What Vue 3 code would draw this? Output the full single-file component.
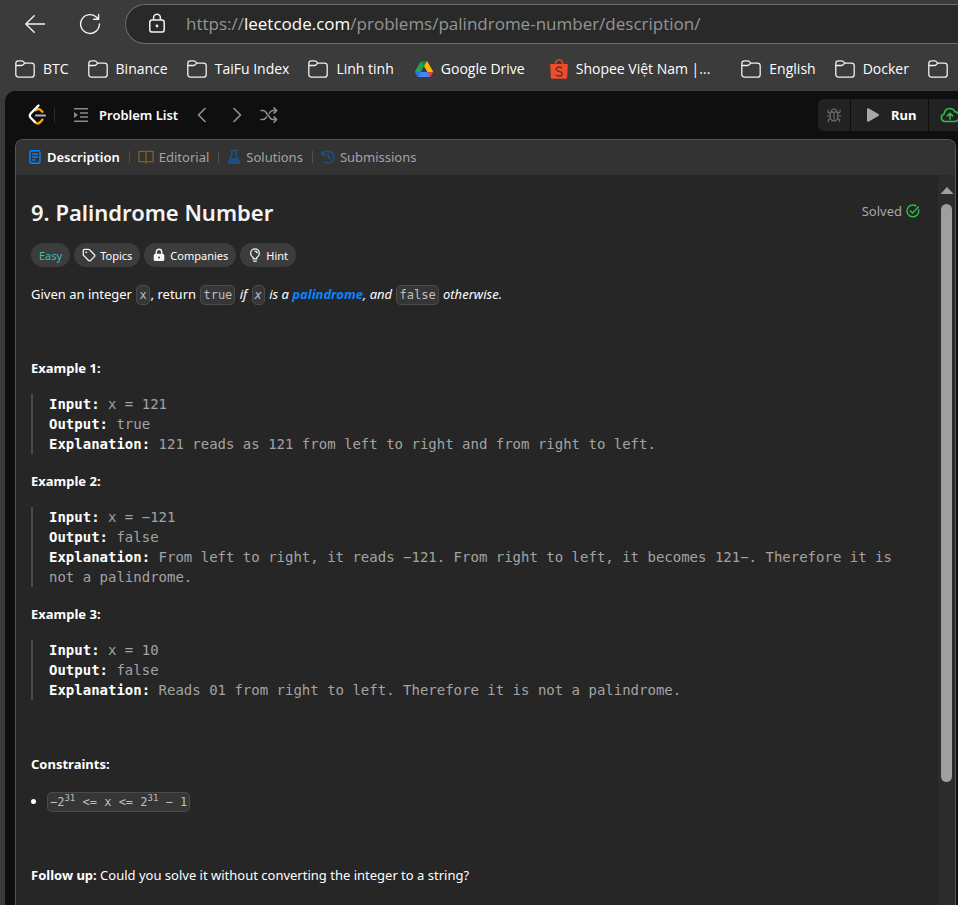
<script setup>
import { ref } from 'vue'

const url = ref('https://leetcode.com/problems/palindrome-number/description/')

const bookmarks = [
  { label: 'BTC', icon: 'folder' },
  { label: 'Binance', icon: 'folder' },
  { label: 'TaiFu Index', icon: 'folder' },
  { label: 'Linh tinh', icon: 'folder' },
  { label: 'Google Drive', icon: 'drive' },
  { label: 'Shopee Việt Nam |...', icon: 'shopee' },
  { label: 'English', icon: 'folder' },
  { label: 'Docker', icon: 'folder' },
  { label: '', icon: 'folder' }
]

const examples = [
  {
    input: 'x = 121',
    output: 'true',
    explanation: '121 reads as 121 from left to right and from right to left.'
  },
  {
    input: 'x = −121',
    output: 'false',
    explanation:
      'From left to right, it reads −121. From right to left, it becomes 121−. Therefore it is not a palindrome.'
  },
  {
    input: 'x = 10',
    output: 'false',
    explanation: 'Reads 01 from right to left. Therefore it is not a palindrome.'
  }
]
</script>

<template>
  <div class="browser">
    <header class="chrome">
      <div class="toolbar">
        <button class="nav-btn" type="button" aria-label="Back">
          <svg width="22" height="22" viewBox="0 0 22 22" fill="none" stroke="#f2f2f2" stroke-width="1.4" stroke-linecap="round" stroke-linejoin="round">
            <path d="M10.2 2.8 1.8 11l8.4 8.2M2 11h18.5" />
          </svg>
        </button>
        <button class="nav-btn" type="button" aria-label="Refresh">
          <svg width="22" height="22" viewBox="0 0 22 22" fill="none" stroke="#f2f2f2" stroke-width="1.4" stroke-linecap="round" stroke-linejoin="round">
            <path d="M20.4 11a9.4 9.4 0 1 1-3.400-7.200l2.400 2.300M19.600 1.400v4.900h-5" />
          </svg>
        </button>
        <div class="address">
          <svg width="18" height="22" viewBox="0 0 18 22" fill="none" stroke="#f2f2f2" stroke-width="1.5">
            <rect x="1.8" y="7.100" width="14.400" height="12" rx="2.400" />
            <path d="M5.600 6.900V4.700a3.400 3.400 0 0 1 6.800 0v2.200" />
            <circle cx="9" cy="13" r="1.400" fill="#f2f2f2" stroke="none" />
          </svg>
          <div class="url">
            <input v-model="url" type="text" aria-label="Address" />
            <span class="url-view" aria-hidden="true">https://<b>leetcode.com</b>/problems/palindrome-number/description/</span>
          </div>
        </div>
      </div>

      <nav class="bookmarks" aria-label="Bookmarks">
        <a v-for="(b, i) in bookmarks" :key="i" href="#" class="bookmark" :class="b.icon">
          <svg v-if="b.icon === 'folder'" width="20" height="20" viewBox="0 0 20 20" fill="none" stroke="#f0f0f0" stroke-width="1.300" stroke-linejoin="round">
            <path d="M.8 4.600c0-1.700 1-2.700 2.700-2.700h3.100c.8 0 1.300.2 1.800.7l1.500 1.500h6.600c1.700 0 2.700 1 2.700 2.700v8.600c0 1.700-1 2.700-2.700 2.700h-13c-1.700 0-2.700-1-2.700-2.700z" />
            <path d="M.9 6.500h5.400c.8 0 1.300-.2 1.800-.7l1.700-1.700" />
          </svg>
          <svg v-else-if="b.icon === 'drive'" width="18" height="18" viewBox="0 0 87 78">
            <path d="m6.6 66.85 3.85 6.65c.8 1.4 1.95 2.5 3.3 3.3L27.5 53H0c0 1.55.4 3.1 1.2 4.5z" fill="#2674f4" />
            <path d="M43.65 25 29.9 1.2c-1.35.8-2.5 1.9-3.3 3.3L1.2 48.5A9 9 0 0 0 0 53h27.5z" fill="#22a453" />
            <path d="M73.55 76.8c1.35-.8 2.5-1.9 3.3-3.3l1.6-2.75L86.1 57.5c.8-1.4 1.2-2.95 1.2-4.5H59.8l5.85 11.5z" fill="#ea4335" />
            <path d="M43.65 25 57.4 1.2C56.05.4 54.5 0 52.9 0H34.4c-1.6 0-3.15.45-4.5 1.2z" fill="#188038" />
            <path d="M59.8 53H27.5L13.75 76.8c1.35.8 2.9 1.2 4.5 1.2h50.8c1.6 0 3.15-.45 4.5-1.2z" fill="#4285f4" />
            <path d="M73.4 26.5 60.7 4.5c-.8-1.4-1.95-2.5-3.3-3.3L43.65 25 59.8 53h27.45c0-1.55-.4-3.1-1.2-4.5z" fill="#fbbc04" />
          </svg>
          <svg v-else width="18" height="20" viewBox="0 0 18 20" fill="none">
            <path d="M.2 5h17.6l-.6 13.300c0 .9-.6 1.500-1.500 1.500H2.300c-.9 0-1.500-.6-1.500-1.500z" fill="#ee4d2d" />
            <path d="M5.400 5.200C5.400 2.600 6.900.9 9 .9s3.600 1.700 3.600 4.300" stroke="#ee4d2d" stroke-width="1.300" />
            <path d="M12 9.200C11.200 8.300 10.200 8 9 8c-1.600 0-2.800.8-2.800 2.100 0 3 6 1.600 6 4.700 0 1.400-1.300 2.200-3 2.200-1.400 0-2.600-.5-3.500-1.400" stroke="#5a3029" stroke-width="1.300" />
          </svg>
          <span v-if="b.label">{{ b.label }}</span>
        </a>
      </nav>
    </header>

    <div class="page">
      <header class="topbar">
        <a class="logo" href="#" aria-label="LeetCode">
          <svg width="18" height="22" viewBox="0 0 18 22" fill="none" stroke-width="2.300" stroke-linecap="round">
            <path d="M7.800 6.200c1.700-1.300 3.700-1.200 5.100.1l1.600 1.500M14.500 15.600l-2 2.300c-1.500 1.600-3.800 1.800-5.400.4" stroke="#ffa116" />
            <path d="M10.500 1.500 2.900 9.300c-1.300 1.400-1.300 3.300 0 4.700l3.900 3.900" stroke="#fff" />
            <path d="M8 11.600h9" stroke="#b3b3b3" stroke-width="2" />
          </svg>
        </a>
        <span class="rule"></span>
        <button class="plain problem-list" type="button">
          <svg width="16" height="16" viewBox="0 0 16 16" fill="none" stroke="#8a8a8a" stroke-width="1.600">
            <path d="M1 1.800h14M7 6h8M7 10h8M1 14.200h14" />
            <path d="M1 5v6l4-3z" fill="#8a8a8a" stroke="none" />
          </svg>
          Problem List
        </button>
        <button class="plain" type="button" aria-label="Previous problem">
          <svg width="10" height="16" viewBox="0 0 10 16" fill="none" stroke="#8f8f8f" stroke-width="1.700" stroke-linecap="round" stroke-linejoin="round"><path d="M8 1.500 1.500 8 8 14.500" /></svg>
        </button>
        <button class="plain next" type="button" aria-label="Next problem">
          <svg width="10" height="16" viewBox="0 0 10 16" fill="none" stroke="#8f8f8f" stroke-width="1.700" stroke-linecap="round" stroke-linejoin="round"><path d="M2 1.500 8.500 8 2 14.500" /></svg>
        </button>
        <button class="plain shuffle" type="button" aria-label="Random problem">
          <svg width="18" height="16" viewBox="0 0 18 16" fill="none" stroke="#8f8f8f" stroke-width="1.500" stroke-linecap="round" stroke-linejoin="round">
            <path d="M1 3.500h1.800c1.200 0 2 .4 2.700 1.300l4.900 6.400c.7.900 1.500 1.300 2.700 1.300h3.400M1 12.500h1.800c1.200 0 2-.4 2.700-1.300l1-1.300M9.400 6.100l1-1.300c.7-.9 1.500-1.300 2.700-1.300h3.400M14 .9l2.700 2.600L14 6.100M14 9.900l2.700 2.600L14 15.100" />
          </svg>
        </button>

        <div class="actions">
          <button type="button" class="debug" aria-label="Debug">
            <svg width="16" height="16" viewBox="0 0 16 16" fill="none" stroke="#6c6c6c" stroke-width="1.200" stroke-linecap="round" stroke-linejoin="round">
              <path d="M4.300 5.200h7.400v4.600c0 2.400-1.500 4.200-3.700 4.200s-3.700-1.800-3.700-4.200zM8 5.200V14M5.300 5c0-1.900 1-3 2.700-3s2.700 1.100 2.700 3M4.300 6.400 2 5.200V3M11.700 6.400 14 5.200V3M4.300 9H1.200M11.700 9h3.100M4.700 11.300 2.400 12.600V14.600M11.300 11.300l2.300 1.300v2" />
            </svg>
          </button>
          <button type="button" class="run">
            <svg width="14" height="16" viewBox="0 0 14 16"><path d="M1 2.200C1 1.300 2 .9 2.800 1.400l9.600 5.500c.8.500.8 1.700 0 2.200l-9.600 5.500c-.8.500-1.800.1-1.800-.8z" fill="#a8a8a8" /></svg>
            Run
          </button>
          <button type="button" class="submit" aria-label="Submit">
            <svg width="20" height="16" viewBox="0 0 20 16" fill="none" stroke="#28c244" stroke-width="1.600" stroke-linecap="round" stroke-linejoin="round">
              <path d="M5 14.500a3.900 3.900 0 0 1-.9-7.600C4.500 3.600 6.800 1.500 9.800 1.500c2.400 0 4.300 1.300 5.200 3.300 2.400.3 4.200 2.300 4.200 4.800 0 2.800-2.100 4.900-4.800 4.900zM10 12V6.600M7.400 8.900 10 6.300l2.600 2.600" />
            </svg>
          </button>
        </div>
      </header>

      <main class="panel">
        <nav class="tabs" aria-label="Problem sections">
          <a href="#" class="tab active">
            <svg width="12" height="16" viewBox="0 0 12 16" fill="none" stroke="#0a84ff" stroke-width="1.400" stroke-linecap="round">
              <rect x="1" y="1.700" width="10" height="12.600" rx="1.700" /><path d="M3.600 5h4.800M3.600 8h4.800M3.600 11H6" />
            </svg>
            Description
          </a>
          <a href="#" class="tab">
            <svg width="16" height="14" viewBox="0 0 16 14" fill="none" stroke="#80621e" stroke-width="1.300" stroke-linejoin="round">
              <path d="M8 3c0-1 .8-1.700 1.800-1.700h5.300v10.400h-5C8.900 11.700 8 12 8 13c0-1-.9-1.300-2.100-1.300h-5V1.300h5.300C7.200 1.300 8 2 8 3zM8 3v9.500" />
            </svg>
            Editorial
          </a>
          <a href="#" class="tab">
            <svg width="14" height="16" viewBox="0 0 14 16" fill="none" stroke="#1f5083" stroke-width="1.400" stroke-linecap="round" stroke-linejoin="round">
              <path d="M3.800 1.500h6.400M4.900 1.700v4.600L1.700 12.200c-.5 1.100 0 2.100 1.200 2.100h8.200c1.200 0 1.700-1 1.200-2.100L9.100 6.300V1.700" />
              <path d="M3.700 9.300h6.600l1.900 4.500H1.800z" fill="#1f5083" stroke="none" />
            </svg>
            Solutions
          </a>
          <a href="#" class="tab">
            <svg width="14" height="14" viewBox="0 0 14 14" fill="none" stroke="#1f5083" stroke-width="1.500" stroke-linecap="round" stroke-linejoin="round">
              <path d="M1.500 5A6 6 0 0 1 13 7a6 6 0 0 1-9.500 4.900M.9 1.400V5h3.600M7.200 4v3.200l2 1.300" />
            </svg>
            Submissions
          </a>
        </nav>

        <div class="scroller">
          <article class="content">
            <div class="heading">
              <h1>9. Palindrome Number</h1>
              <span class="solved">
                Solved
                <svg width="14" height="14" viewBox="0 0 14 14" fill="none" stroke="#28c244" stroke-width="1.400" stroke-linecap="round" stroke-linejoin="round">
                  <path d="M12.700 5.800A5.900 5.900 0 1 1 10 1.900M4.300 6.900l2.200 2.200 5.900-6.200" />
                </svg>
              </span>
            </div>

            <div class="tags">
              <span class="tag easy">Easy</span>
              <button type="button" class="tag">
                <svg width="14" height="14" viewBox="0 0 14 14" fill="none" stroke="#f2f2f2" stroke-width="1.300" stroke-linejoin="round">
                  <path d="M1.300 2.600c0-.8.500-1.300 1.300-1.300h3.700c.5 0 .9.200 1.200.5l4.900 4.900c.6.600.6 1.300 0 1.900l-3.900 3.900c-.6.600-1.300.6-1.900 0L1.800 7.600c-.3-.3-.5-.7-.5-1.200z" /><circle cx="4.300" cy="4.300" r=".9" fill="#f2f2f2" stroke="none" />
                </svg>
                Topics
              </button>
              <button type="button" class="tag">
                <svg width="14" height="14" viewBox="0 0 14 14" fill="none">
                  <rect x="1.700" y="5.800" width="10.600" height="7.200" rx="1.600" fill="#f5f5f5" />
                  <path d="M4.300 6V4a2.700 2.700 0 0 1 5.400 0v2" stroke="#f5f5f5" stroke-width="1.400" /><circle cx="7" cy="9.400" r="1" fill="#3c3c3c" />
                </svg>
                Companies
              </button>
              <button type="button" class="tag">
                <svg width="14" height="14" viewBox="0 0 14 14" fill="none" stroke="#f2f2f2" stroke-width="1.300" stroke-linecap="round">
                  <path d="M5.200 10.800V9.500C3.600 8.700 2.700 7.200 2.700 5.200a4.300 4.300 0 0 1 8.600 0c0 2-.9 3.500-2.500 4.300v1.300zM5.700 13.200h2.600M7 3.100c1 0 1.900.7 2.100 1.700" />
                </svg>
                Hint
              </button>
            </div>

            <p>
              Given an integer <code>x</code>, return <code>true</code>
              <em> if <code>x</code> is a <a href="#" class="term">palindrome</a>, and </em>
              <code>false</code><em> otherwise.</em>
            </p>
            <p>&nbsp;</p>

            <template v-for="(e, i) in examples" :key="i">
              <p><strong>Example {{ i + 1 }}:</strong></p>
              <pre><strong>Input:</strong> {{ e.input }}
<strong>Output:</strong> {{ e.output }}
<strong>Explanation:</strong> {{ e.explanation }}</pre>
            </template>

            <p>&nbsp;</p>
            <p><strong>Constraints:</strong></p>
            <ul>
              <li><code>−2<sup>31</sup> &lt;= x &lt;= 2<sup>31</sup> − 1</code></li>
            </ul>
            <p>&nbsp;</p>
            <p><strong>Follow up:</strong> Could you solve it without converting the integer to a string?</p>
          </article>

          <div class="scrollbar" aria-hidden="true">
            <svg width="14" height="8" viewBox="0 0 14 8"><path d="M7 0 13.500 7H.5z" fill="#9f9f9f" /></svg>
            <div class="thumb"></div>
            <div class="rest"></div>
          </div>
        </div>
      </main>
    </div>
  </div>
</template>

<style>
body {
  background: #3b3b3b;
}
</style>

<style scoped>
* {
  box-sizing: border-box;
}

.browser {
  min-height: 100vh;
  display: flex;
  flex-direction: column;
  overflow: hidden;
  background: #3b3b3b;
  color: #fff;
  font-family: 'Noto Sans', 'Open Sans', sans-serif;
  font-size: 13px;
}

svg {
  display: block;
  flex: none;
}

a {
  color: inherit;
  text-decoration: none;
}

button {
  margin: 0;
  padding: 0;
  border: 0;
  background: none;
  color: inherit;
  font: inherit;
  cursor: pointer;
}

.chrome {
  font-family: 'Open Sans', 'Noto Sans', sans-serif;
}

.toolbar {
  height: 48px;
  display: flex;
  align-items: center;
  padding-left: 24px;
}

.nav-btn {
  margin-right: 33px;
}

.nav-btn + .nav-btn {
  margin-right: 24px;
}

.address {
  flex: 1;
  height: 40px;
  display: flex;
  align-items: center;
  gap: 20px;
  padding-left: 22px;
  border: 1px solid #6b6b6b;
  border-right: 0;
  border-radius: 20px 0 0 20px;
  background: #292929;
  font-size: 17px;
}

.url {
  flex: 1;
  display: grid;
  align-items: center;
  padding-bottom: 2px;
}

.url > * {
  grid-area: 1 / 1;
  white-space: nowrap;
}

.url input {
  width: 100%;
  padding: 0;
  border: 0;
  outline: 0;
  background: none;
  color: transparent;
  font: inherit;
}

.url input:focus {
  color: #fff;
}

.url input:focus + .url-view {
  visibility: hidden;
}

.url-view {
  color: #959595;
  pointer-events: none;
}

.url-view b {
  color: #fff;
  font-weight: 400;
}

.bookmarks {
  height: 43px;
  display: flex;
  align-items: center;
  gap: 19px;
  padding: 0 0 2px 15px;
  overflow: hidden;
  font-size: 14px;
}

.bookmark {
  flex: none;
  display: flex;
  align-items: center;
  gap: 8px;
}

.bookmark.drive {
  margin: 0 6px 0 2px;
}

.bookmark.shopee {
  margin-right: 12px;
}

.page {
  flex: 1;
  display: flex;
  flex-direction: column;
  margin-left: 5px;
  border-radius: 10px 0 0 0;
  background: #0f0f0f;
}

.topbar {
  height: 48px;
  display: flex;
  align-items: center;
  padding-left: 23px;
}

.rule {
  width: 1px;
  height: 16px;
  margin: 0 18px 0 8px;
  background: #2c2c2c;
}

.problem-list {
  display: flex;
  align-items: center;
  gap: 10px;
  margin-right: 19px;
  font-weight: 600;
}

.next {
  margin-left: 25px;
}

.shuffle {
  margin-left: 18px;
}

.actions {
  display: flex;
  gap: 1px;
  margin-left: auto;
}

.actions button {
  height: 32px;
  display: flex;
  align-items: center;
  background: #222;
}

.actions .debug {
  width: 32px;
  justify-content: center;
  border-radius: 6px 0 0 6px;
}

.actions .run {
  gap: 11px;
  width: 77px;
  padding-left: 15px;
  font-weight: 700;
}

.actions .submit {
  width: 29px;
  padding-left: 11px;
  overflow: hidden;
}

.panel {
  flex: 1;
  display: flex;
  flex-direction: column;
  margin-right: 2px;
  margin-left: 10px;
  border: 1px solid #555;
  border-bottom: 0;
  border-radius: 8px 8px 0 0;
  background: #262626;
  overflow: hidden;
}

.tabs {
  height: 35px;
  display: flex;
  align-items: center;
  padding: 0 0 2px 13px;
  background: #333;
  color: #a3a3a3;
}

.tab {
  display: flex;
  align-items: center;
  gap: 5px;
}

.tab + .tab::before {
  content: '';
  width: 1px;
  height: 12px;
  margin: 0 3px 0 9px;
  background: #505050;
}

.tab.active {
  gap: 6px;
  color: #fff;
  font-weight: 600;
}

.scroller {
  flex: 1;
  display: flex;
}

.content {
  flex: 1;
  min-width: 0;
  padding: 20px 18px 0 15px;
  line-height: 21px;
}

.heading {
  display: flex;
  align-items: center;
  justify-content: space-between;
}

h1 {
  margin: 0;
  font-size: 22px;
  font-weight: 600;
  line-height: 34px;
  color: #f5f5f5;
}

.solved {
  display: flex;
  align-items: center;
  gap: 4px;
  padding-bottom: 2px;
  color: #a8a8a8;
}

.tags {
  display: flex;
  gap: 4px;
  margin: 14px 0 17px;
}

.tag {
  height: 24px;
  display: flex;
  align-items: center;
  gap: 4px;
  padding: 0 8px;
  border-radius: 12px;
  background: #3c3c3c;
  font-family: 'Noto Sans', 'Open Sans', sans-serif;
  font-size: 11px;
}

.easy {
  color: #3cbfae;
}

p,
ul {
  margin: 0 0 16px;
}

ul {
  padding-left: 16px;
}

code,
pre {
  font-family: 'DejaVu Sans Mono', monospace;
}

code {
  padding: 2px;
  border: 1px solid #4b4b4b;
  border-radius: 5px;
  background: #363636;
  color: #bfbfbf;
  font-size: 12px;
  line-height: 12px;
}

p code {
  margin: 0 1px;
}

sup {
  font-size: 9px;
  line-height: 0;
}

.term {
  color: #0a84ff;
  font-weight: 700;
}

strong {
  font-weight: 700;
}

pre {
  margin: -1px 0 17px;
  padding-left: 16px;
  border-left: 2px solid #4a4a4a;
  color: #a3a3a3;
  font-size: 14px;
  line-height: 20px;
  white-space: pre-wrap;
}

pre strong {
  color: #fff;
}

.scrollbar {
  width: 17px;
  display: flex;
  flex-direction: column;
  align-items: center;
  gap: 9px;
  padding-top: 12px;
  background: #2c2c2c;
}

.thumb {
  width: 11px;
  flex: 578;
  border-radius: 6px;
  background: #9f9f9f;
}

.rest {
  flex: 114;
}
</style>
